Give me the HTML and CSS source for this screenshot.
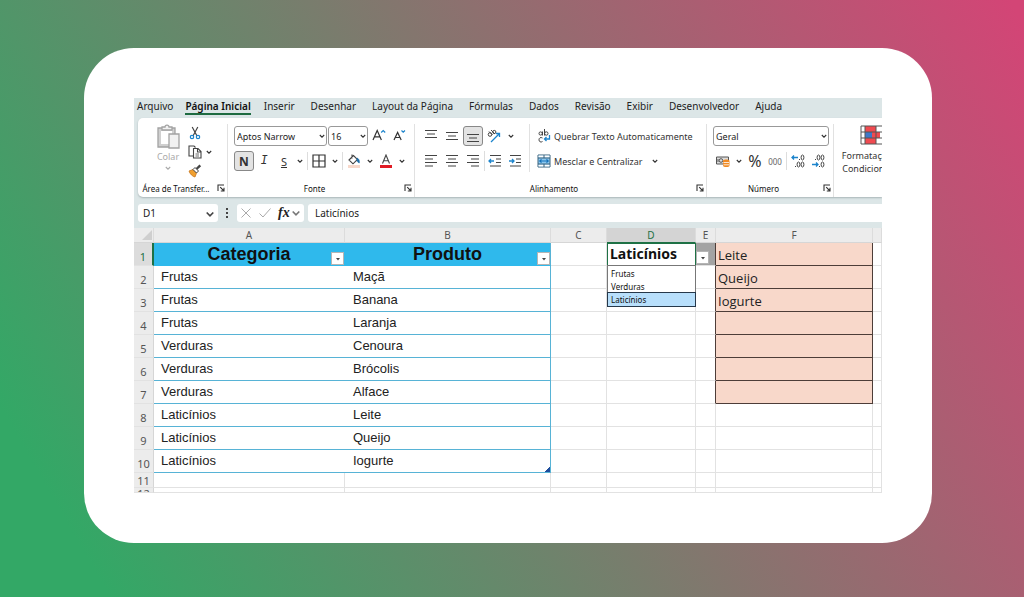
FILE: index.html
```html
<!DOCTYPE html>
<html lang="pt-BR">
<head>
    <meta charset="UTF-8">
    <meta name="viewport" content="width=device-width, initial-scale=1.0">
    <title>Lista suspensa dependente</title>
    <link rel="stylesheet" href="styles.css">
</head>
<body>

    <!-- shared icons -->
    <svg class="sprite" aria-hidden="true">
        <symbol id="chev" viewBox="0 0 8 8"><path d="M1.8 3 4 5.2 6.2 3" fill="none" stroke="currentColor" stroke-width="1.1"/></symbol>
        <symbol id="launch" viewBox="0 0 8 8"><path d="M1 7V1h6M3.2 3.2 7 7M7 3.8V7H3.8" fill="none" stroke="#333" stroke-width="1.1"/></symbol>
        <symbol id="drop" viewBox="0 0 8 8"><path d="M2 3h4L4 5.4z" fill="#444"/></symbol>
    </svg>

    <main class="card">
        <div class="app">

            <nav class="tabs">
                <a href="#">Arquivo</a>
                <a href="#" class="active">Página Inicial</a>
                <a href="#">Inserir</a>
                <a href="#">Desenhar</a>
                <a href="#">Layout da Página</a>
                <a href="#">Fórmulas</a>
                <a href="#">Dados</a>
                <a href="#">Revisão</a>
                <a href="#">Exibir</a>
                <a href="#">Desenvolvedor</a>
                <a href="#">Ajuda</a>
            </nav>

            <div class="ribbon">
                <section class="group clipboard">
                    <div class="group-body">
                        <button class="paste" disabled>
                            <svg width="26" height="26" viewBox="0 0 26 26" fill="#f1f1f1" stroke="#a3a3a3" stroke-width="1.3">
                                <path d="M3 4h17v19H3z" fill="#d0d0d0"/>
                                <path d="M6 7h11v13H6z" fill="#fff" stroke="none"/>
                                <path d="M7 6V3h3c0-2.600 4-2.600 4 0h3v3z"/>
                                <path d="M14 10h10v14H14z"/>
                            </svg>
                            <span>Colar</span>
                            <svg width="8" height="8"><use href="#chev"/></svg>
                        </button>
                        <div class="clip-tools">
                            <button aria-label="Recortar">
                                <svg width="14" height="14" viewBox="0 0 14 14" fill="none">
                                    <path d="M4.200 1l4.800 9M9.800 1 5 10" stroke="#444" stroke-width="1.200"/>
                                    <circle cx="4" cy="11" r="1.700" stroke="#1c84cc" stroke-width="1.200"/>
                                    <circle cx="10" cy="11" r="1.700" stroke="#1c84cc" stroke-width="1.200"/>
                                </svg>
                            </button>
                            <button aria-label="Copiar">
                                <svg width="14" height="14" viewBox="0 0 14 14" fill="#fff" stroke="#444" stroke-width="1.100">
                                    <path d="M5 11H1V1h5l1.500 1.500"/>
                                    <path d="M5.500 3.500h4.500l3 3V13H5.500zM9.500 3.500V7H13"/>
                                    <path d="M7.500 9h3.500M7.500 11h3.500" stroke-width=".8"/>
                                </svg>
                                <svg class="side" width="8" height="8"><use href="#chev"/></svg>
                            </button>
                            <button aria-label="Pincel de Formatação">
                                <svg width="14" height="14" viewBox="0 0 14 14">
                                    <path d="M1 7l4-1.500L8.500 9 7 13C4.500 12.500 2 10 1 7z" fill="#f0a030" stroke="#c8761c" stroke-width=".8"/>
                                    <path d="M5 5.500 7 3.500 10.500 7 8.500 9z" fill="#fff" stroke="#444"/>
                                    <path d="M8.500 5 12.300 1.300" stroke="#444" stroke-width="2.400"/>
                                </svg>
                            </button>
                        </div>
                    </div>
                    <footer><span>Área de Transfer...</span><button aria-label="Opções"><svg width="8" height="8"><use href="#launch"/></svg></button></footer>
                </section>

                <section class="group font">
                    <div class="group-body rows">
                        <div class="row">
                            <label class="select name"><select aria-label="Fonte"><option>Aptos Narrow</option></select><svg width="8" height="8"><use href="#chev"/></svg></label>
                            <label class="select size"><select aria-label="Tamanho"><option>16</option></select><svg width="8" height="8"><use href="#chev"/></svg></label>
                            <button class="tool" aria-label="Aumentar Fonte">
                                <svg width="16" height="16" viewBox="0 0 16 16" fill="none" stroke="#333" stroke-width="1.200"><path d="M3 12 7.200 2.500 11.400 12M4.500 8.800h5.400"/><path d="M11.200 4.500l2-2 2 2" stroke="#1c84cc"/></svg>
                            </button>
                            <button class="tool" aria-label="Diminuir Fonte">
                                <svg width="16" height="16" viewBox="0 0 16 16" fill="none" stroke="#333" stroke-width="1.200"><path d="M4 12 7.600 4.500 11.200 12M5.200 9.500h4.800"/><path d="M11.500 2.500l1.700 1.700L15 2.500" stroke="#1c84cc"/></svg>
                            </button>
                        </div>
                        <div class="row">
                            <button class="tool on bold">N</button>
                            <button class="tool italic">I</button>
                            <button class="tool under">S</button>
                            <button class="more" aria-label="Sublinhado"><svg width="8" height="8"><use href="#chev"/></svg></button>
                            <i class="rule"></i>
                            <button class="tool" aria-label="Bordas">
                                <svg width="14" height="14" viewBox="0 0 14 14" fill="none" stroke="#333" stroke-width="1.200"><path d="M1 1h12v12H1zM7 1v12M1 7h12"/></svg>
                            </button>
                            <button class="more" aria-label="Mais bordas"><svg width="8" height="8"><use href="#chev"/></svg></button>
                            <i class="rule"></i>
                            <button class="tool" aria-label="Cor de Preenchimento">
                                <svg width="14" height="14" viewBox="0 0 14 14" fill="none">
                                    <path d="M2 6 6.500 1.500l4 4L6 9.800zM5 .5v4" stroke="#444" stroke-width="1.100"/>
                                    <path d="M10 4c1.800.7 2.700 2.500 2.300 5-2-.5-2.700-2.500-2.300-5z" fill="#1c6ca8" stroke="#1c6ca8" stroke-width=".6"/>
                                    <path d="M1 11h12v3H1z" fill="#f8d8ca"/>
                                </svg>
                            </button>
                            <button class="more" aria-label="Mais cores"><svg width="8" height="8"><use href="#chev"/></svg></button>
                            <button class="tool" aria-label="Cor da Fonte">
                                <svg width="14" height="14" viewBox="0 0 14 14" fill="none"><path d="M3.500 9.500 7 1l3.500 8.500M4.700 6.700h4.600" stroke="#444" stroke-width="1.100"/><path d="M1 11h12v3H1z" fill="#e01b24"/></svg>
                            </button>
                            <button class="more" aria-label="Mais cores da fonte"><svg width="8" height="8"><use href="#chev"/></svg></button>
                        </div>
                    </div>
                    <footer><span>Fonte</span><button aria-label="Opções"><svg width="8" height="8"><use href="#launch"/></svg></button></footer>
                </section>

                <section class="group align">
                    <div class="group-body">
                        <div class="rows">
                            <div class="row spaced">
                                <button class="tool" aria-label="Alinhar em Cima"><svg width="14" height="14" viewBox="0 0 14 14"><path d="M1 1.500h12M3 5h8M1 8.500h12" stroke="#444" stroke-width="1.200"/></svg></button>
                                <button class="tool" aria-label="Alinhar no Meio"><svg width="14" height="14" viewBox="0 0 14 14"><path d="M1 3.500h12M3 7h8M1 10.500h12" stroke="#444" stroke-width="1.200"/></svg></button>
                                <button class="tool on" aria-label="Alinhar Embaixo"><svg width="14" height="14" viewBox="0 0 14 14"><path d="M1 5.500h12M3 9h8M1 12.500h12" stroke="#444" stroke-width="1.200"/></svg></button>
                                <button class="tool" aria-label="Orientação">
                                    <svg width="16" height="14" viewBox="0 0 16 14" fill="none">
                                        <g stroke="#444"><circle cx="4" cy="5.500" r="1.800"/><path d="M3 2.500l3.500 3.500M5 1l4 4"/><circle cx="8.300" cy="3" r="1.600"/></g>
                                        <path d="M5 13 13.500 4.500M10 4.500h3.500V8" stroke="#1c84cc" stroke-width="1.300"/>
                                    </svg>
                                </button>
                                <button class="more" aria-label="Mais orientações"><svg width="8" height="8"><use href="#chev"/></svg></button>
                            </div>
                            <div class="row spaced">
                                <button class="tool" aria-label="Alinhar à Esquerda"><svg width="14" height="14" viewBox="0 0 14 14"><path d="M1 1.500h12M1 5h8M1 8.500h12M1 12h8" stroke="#444" stroke-width="1.200"/></svg></button>
                                <button class="tool" aria-label="Centralizar"><svg width="14" height="14" viewBox="0 0 14 14"><path d="M1 1.500h12M3 5h8M1 8.500h12M3 12h8" stroke="#444" stroke-width="1.200"/></svg></button>
                                <button class="tool" aria-label="Alinhar à Direita"><svg width="14" height="14" viewBox="0 0 14 14"><path d="M1 1.500h12M5 5h8M1 8.500h12M5 12h8" stroke="#444" stroke-width="1.200"/></svg></button>
                                <button class="tool split" aria-label="Diminuir Recuo"><svg width="14" height="14" viewBox="0 0 14 14" fill="none"><path d="M2 1.500h11M8 5h5M8 8.500h5M2 12h11" stroke="#444" stroke-width="1.200"/><path d="M6 7H1M3 5 1 7l2 2" stroke="#1c84cc" stroke-width="1.300"/></svg></button>
                                <button class="tool" aria-label="Aumentar Recuo"><svg width="14" height="14" viewBox="0 0 14 14" fill="none"><path d="M2 1.500h11M8 5h5M8 8.500h5M2 12h11" stroke="#444" stroke-width="1.200"/><path d="M1 7h5M4 5l2 2-2 2" stroke="#1c84cc" stroke-width="1.300"/></svg></button>
                            </div>
                        </div>
                        <div class="rows wrap-tools">
                            <button class="wide">
                                <svg width="14" height="14" viewBox="0 0 14 14" fill="none" stroke="#444">
                                    <circle cx="3.600" cy="4.500" r="1.600"/><path d="M5.500 2.500V6.500M7.500 0v6.500"/><circle cx="9.300" cy="4.500" r="1.700"/>
                                    <path d="M5.500 9c-2-1.200-3.500 0-3.500 1.800s1.700 3 3.500 1.700"/>
                                    <path d="M12.500 6v4H7.500M9.500 8l-2 2 2 2" stroke="#1c84cc" stroke-width="1.300"/>
                                </svg>
                                Quebrar Texto Automaticamente
                            </button>
                            <button class="wide">
                                <svg width="14" height="14" viewBox="0 0 14 14" fill="none">
                                    <path d="M1 1h12v12H1z" fill="#8cc8f0" stroke="#39607b"/><path d="M1.500 1.500h11v2h-11zM1.500 10.500h11v2h-11z" fill="#fff"/><path d="M1 4h12M1 10h12M7 1v3M7 10v3" stroke="#39607b"/>
                                    <path d="M2.500 7h9M4.500 5.300 2.700 7l1.800 1.700M9.500 5.300 11.300 7 9.500 8.700" stroke="#1370b8" stroke-width="1.100"/>
                                </svg>
                                Mesclar e Centralizar
                                <svg class="after" width="8" height="8"><use href="#chev"/></svg>
                            </button>
                        </div>
                    </div>
                    <footer><span>Alinhamento</span><button aria-label="Opções"><svg width="8" height="8"><use href="#launch"/></svg></button></footer>
                </section>

                <section class="group number">
                    <div class="group-body rows">
                        <div class="row">
                            <label class="select format"><select aria-label="Formato de Número"><option>Geral</option></select><svg width="8" height="8"><use href="#chev"/></svg></label>
                        </div>
                        <div class="row">
                            <button class="tool" aria-label="Formato de Contabilização">
                                <svg width="16" height="14" viewBox="0 0 16 14" fill="none">
                                    <path d="M1.500 3h12v7h-12z" fill="#ddd" stroke="#555"/><circle cx="6" cy="6.500" r="1.800" stroke="#555"/><path d="M3 5v3" stroke="#555"/>
                                    <path d="M8 7c0-2 6.500-2 6.500 0v4.500c0 2-6.500 2-6.500 0z" fill="#f08a24"/><path d="M8.500 8.500h5.500M8.500 10.800h5.500" stroke="#fff" stroke-width=".8"/>
                                </svg>
                            </button>
                            <button class="more" aria-label="Mais moedas"><svg width="8" height="8"><use href="#chev"/></svg></button>
                            <button class="tool percent">%</button>
                            <button class="tool zeros">000</button>
                            <i class="rule"></i>
                            <button class="tool" aria-label="Aumentar Casas Decimais">
                                <svg width="14" height="14" viewBox="0 0 14 14" fill="none" stroke="#444">
                                    <path d="M7 3.500H1M3 1.500l-2 2 2 2" stroke="#1c84cc" stroke-width="1.300"/>
                                    <ellipse cx="11.500" cy="3.500" rx="1.400" ry="2.500"/><ellipse cx="7.500" cy="10.500" rx="1.400" ry="2.500"/><ellipse cx="11.500" cy="10.500" rx="1.400" ry="2.500"/>
                                    <path d="M8 5.500h1M4 12.500h1"/>
                                </svg>
                            </button>
                            <button class="tool" aria-label="Diminuir Casas Decimais">
                                <svg width="14" height="14" viewBox="0 0 14 14" fill="none" stroke="#444">
                                    <path d="M1 10.500h6M5 8.500l2 2-2 2" stroke="#1c84cc" stroke-width="1.300"/>
                                    <ellipse cx="7.500" cy="3.500" rx="1.400" ry="2.500"/><ellipse cx="11.500" cy="3.500" rx="1.400" ry="2.500"/><ellipse cx="11.500" cy="10.500" rx="1.400" ry="2.500"/>
                                    <path d="M4 5.500h1M8 12.500h1"/>
                                </svg>
                            </button>
                        </div>
                    </div>
                    <footer><span>Número</span><button aria-label="Opções"><svg width="8" height="8"><use href="#launch"/></svg></button></footer>
                </section>

                <section class="group styles">
                    <button class="conditional">
                        <svg width="26" height="20" viewBox="0 0 26 20">
                            <path d="M1 1h24v18H1z" fill="#fff"/>
                            <path d="M5 1h11v6H5zM12 7h8v6h-8zM5 13h11v6H5z" fill="#f04a50"/><path d="M5 7h7v6H5z" fill="#3f78c8"/>
                            <path d="M1 1h24v18H1zM1 7h24M1 13h24M5 1v18M16 1v18" fill="none" stroke="#555"/>
                        </svg>
                        <span>Formatação</span>
                        <span>Condicional</span>
                    </button>
                </section>
            </div>

            <div class="formula-bar">
                <label class="name-box"><input type="text" value="D1" aria-label="Caixa de nome"><svg width="12" height="12"><use href="#chev"/></svg></label>
                <svg class="dots" width="3" height="12" viewBox="0 0 3 12" fill="#444"><path d="M0 1h2v2H0zM0 5h2v2H0zM0 9h2v2H0z"/></svg>
                <div class="fx">
                    <button aria-label="Cancelar"><svg width="12" height="12" viewBox="0 0 12 12" fill="none" stroke="#aaa"><path d="M1.500 1.500l9 9M10.500 1.500l-9 9"/></svg></button>
                    <button aria-label="Inserir"><svg width="14" height="12" viewBox="0 0 14 12" fill="none" stroke="#aaa"><path d="M1.500 6.500 5 10l7.500-8.500"/></svg></button>
                    <button class="fn">fx</button>
                    <svg class="fn-more" width="12" height="12"><use href="#chev"/></svg>
                </div>
                <input class="formula" type="text" value="Laticínios" aria-label="Barra de fórmulas">
            </div>

            <table class="sheet">
                <colgroup>
                    <col class="c-num"><col class="c-a"><col class="c-b"><col class="c-c"><col class="c-d"><col class="c-e"><col class="c-f"><col>
                </colgroup>
                <thead>
                    <tr>
                        <th class="corner"><svg width="10" height="10" viewBox="0 0 10 10"><path d="M10 0v10H0z" fill="#cfcfcf"/></svg></th>
                        <th>A</th><th>B</th><th>C</th><th class="sel">D</th><th>E</th><th>F</th><th></th>
                    </tr>
                </thead>
                <tbody>
                    <tr>
                        <th class="sel">1</th>
                        <td class="head"><div>Categoria<button class="filter" aria-label="Filtrar"><svg width="8" height="8"><use href="#drop"/></svg></button></div></td>
                        <td class="head last"><div>Produto<button class="filter" aria-label="Filtrar"><svg width="8" height="8"><use href="#drop"/></svg></button></div></td>
                        <td></td>
                        <td class="current">
                            <div>Laticínios
                                <ul class="options" role="listbox">
                                    <li role="option">Frutas</li>
                                    <li role="option">Verduras</li>
                                    <li role="option" aria-selected="true">Laticínios</li>
                                </ul>
                            </div>
                        </td>
                        <td class="gray edge"><div><button class="filter" aria-label="Abrir lista"><svg width="8" height="8"><use href="#drop"/></svg></button></div></td>
                        <td class="result">Leite</td><td></td>
                    </tr>
                    <tr><th>2</th><td class="data">Frutas</td><td class="data last">Maçã</td><td></td><td></td><td class="edge"></td><td class="result">Queijo</td><td></td></tr>
                    <tr><th>3</th><td class="data">Frutas</td><td class="data last">Banana</td><td></td><td></td><td class="edge"></td><td class="result">Iogurte</td><td></td></tr>
                    <tr><th>4</th><td class="data">Frutas</td><td class="data last">Laranja</td><td></td><td></td><td class="edge"></td><td class="result"></td><td></td></tr>
                    <tr><th>5</th><td class="data">Verduras</td><td class="data last">Cenoura</td><td></td><td></td><td class="edge"></td><td class="result"></td><td></td></tr>
                    <tr><th>6</th><td class="data">Verduras</td><td class="data last">Brócolis</td><td></td><td></td><td class="edge"></td><td class="result"></td><td></td></tr>
                    <tr><th>7</th><td class="data">Verduras</td><td class="data last">Alface</td><td></td><td></td><td class="edge"></td><td class="result"></td><td></td></tr>
                    <tr><th>8</th><td class="data">Laticínios</td><td class="data last">Leite</td><td></td><td></td><td></td><td></td><td></td></tr>
                    <tr><th>9</th><td class="data">Laticínios</td><td class="data last">Queijo</td><td></td><td></td><td></td><td></td><td></td></tr>
                    <tr><th>10</th><td class="data">Laticínios</td><td class="data last end">Iogurte</td><td></td><td></td><td></td><td></td><td></td></tr>
                    <tr class="short"><th>11</th><td></td><td></td><td></td><td></td><td></td><td></td><td></td></tr>
                    <tr class="cut"><th><div>12</div></th><td></td><td></td><td></td><td></td><td></td><td></td><td></td></tr>
                </tbody>
            </table>

        </div>
    </main>

</body>
</html>
```
FILE: styles.css
```css
* { box-sizing: border-box; }
body { margin: 0; min-height: 100vh; padding: 48px 92px 53px 84px; font-family: "Noto Sans", "Open Sans", sans-serif; color: #222; background: linear-gradient(60deg, #33a866 8%, #d34576 99%); }
button { display: flex; align-items: center; justify-content: center; padding: 0; border: 0; background: none; font: inherit; color: inherit; }
svg { flex: none; display: block; }
.sprite { position: absolute; width: 0; height: 0; }
.card { background: #fff; border-radius: 50px; padding: 50px; }
.app { overflow: hidden; background: #dce6e7; }

/* tabs */
.tabs { display: flex; height: 20px; padding: 0 3px; gap: 16px; font-size: 10px; line-height: 16px; white-space: nowrap; }
.tabs a { color: #222; text-decoration: none; height: 17px; }
.tabs a:first-child { margin-right: -4px; }
.tabs .active { margin-right: -3px; font-weight: 600; color: #111; border-bottom: 2px solid #1e6b41; }

/* ribbon */
.ribbon { display: flex; height: 79px; margin-left: 4px; padding-top: 6px; background: #fff; border-radius: 5px 0 0 5px; box-shadow: 0 1px 2px #a9b5b7; font-size: 9px; color: #333; }
.group { flex: none; display: flex; flex-direction: column; border-right: 1px solid #e1e1e1; }
.group-body { display: flex; flex: 1; padding-left: 6px; }
.group footer { display: flex; align-items: center; height: 16px; margin-bottom: 1px; font-size: 8px; white-space: nowrap; }
.group footer span { flex: 1; text-align: center; color: #111; }
.group footer button { width: 13px; }
.clipboard { width: 90px; }
.font { width: 187px; }
.align { width: 292px; }
.number { width: 127px; }
.styles { border: 0; }
.rows { display: flex; flex-direction: column; gap: 5px; padding-top: 2px; }
.row { display: flex; align-items: center; height: 20px; }
.spaced { gap: 1px; }
.tool { width: 20px; height: 20px; }
.more { width: 12px; height: 20px; }
.on { background: #e3e3e3; border: 1px solid #888; border-radius: 3px; }
.bold { font-size: 12px; font-weight: 700; }
.italic { font: italic 12px "Liberation Mono", monospace; }
.under { font-size: 11px; text-decoration: underline; }
.percent { font-size: 16px; }
.zeros { font-size: 8px; color: #666; }
.rule { width: 1px; height: 18px; margin: 0 1px; background: #ddd; }
.split { border-left: 1px solid #ddd; }

.select { position: relative; height: 20px; }
.select select { appearance: none; width: 100%; height: 20px; padding: 0 0 0 2px; border: 1px solid #999; border-radius: 3px; background: #fff; font: inherit; color: #222; }
.select svg { position: absolute; right: 1px; top: 6px; }
.name { width: 93px; margin-right: 1px; }
.size { width: 40px; }
.format { width: 116px; }

.clipboard .group-body { padding-left: 14px; }
.paste { flex-direction: column; width: 32px; justify-content: flex-start; color: #aaa; }
.paste span { line-height: 14px; }
.clip-tools { display: flex; flex-direction: column; justify-content: space-between; width: 26px; padding-left: 4px; }
.clip-tools button { position: relative; width: 14px; height: 18px; }
.side { position: absolute; left: 17px; top: 5px; }

.wrap-tools { margin-left: 4px; padding-left: 7px; border-left: 1px solid #e1e1e1; height: 48px; }
.wide { justify-content: flex-start; gap: 3px; height: 20px; white-space: nowrap; }
.after { margin-left: 5px; }

.conditional { flex-direction: column; width: 66px; padding-top: 1px; line-height: 13px; }
.conditional svg { margin: 0 0 4px 12px; }

/* formula bar */
.formula-bar { display: flex; align-items: center; height: 31px; padding-left: 4px; font-size: 10px; }
.formula-bar input { border: 0; background: #fff; border-radius: 3px; height: 18px; padding: 0 0 0 5px; font: inherit; color: #222; }
.name-box { position: relative; width: 80px; color: #444; }
.name-box input { width: 80px; }
.name-box svg { position: absolute; right: 2px; top: 4px; }
.dots { margin: 0 8px; }
.fx { display: flex; align-items: center; gap: 6px; width: 67px; height: 18px; padding-left: 3px; background: #fff; border-radius: 3px; color: #777; }
.fn { font: italic bold 14px "Liberation Serif", serif; color: #222; }
.fn-more { margin-left: -6px; }
.formula-bar .formula { flex: 1; min-width: 0; margin-left: 4px; padding-left: 7px; border-radius: 3px 0 0 3px; }

/* sheet */
.sheet { width: 100%; table-layout: fixed; border-collapse: separate; border-spacing: 0; background: #fff; }
.c-num { width: 20px; }
.c-a { width: 191px; }
.c-b { width: 206px; }
.c-c { width: 56px; }
.c-d { width: 89px; }
.c-e { width: 20px; }
.c-f { width: 157px; }
.sheet th, .sheet td { padding: 0; border: 0 solid #e2e2e2; border-width: 0 1px 1px 0; }
.sheet th { background: #ececec; font-size: 10px; line-height: 12px; font-weight: 400; color: #555; border-color: #d6d6d6; }
.sheet thead th { height: 15px; border-right-color: #dcdcdc; }
.sheet tbody th { padding-bottom: 2px; border-bottom-color: #e2e2e2; vertical-align: bottom; font-size: 11px; }
.sheet thead .sel { background: #d4d4d4; color: #1e7145; border-bottom-color: #1e7145; }
.sheet tbody .sel { background: #dcdcdc; color: #1e7145; border-right: 2px solid #1e7145; }
.corner svg { margin-left: 8px; }
.sheet tbody tr { height: 23px; }
.sheet td div { position: relative; }
.sheet .head { background: #2fb9ec; border-color: #2fb9ec; color: #111; font: bold 18px/22px "Liberation Sans", Arial, sans-serif; text-align: center; }
.sheet .data { padding-left: 7px; border-width: 0 0 1px; border-bottom-color: #57b3d6; font: 13px/22px "Liberation Sans", Arial, sans-serif; }
.sheet .last { border-right: 1px solid #57b3d6; }
.sheet .data.last { padding-left: 8px; }
.sheet .end { background: linear-gradient(135deg, transparent 50%, #1f4e9c 50%) right bottom / 5px 5px no-repeat; }
.sheet .current { border: 1px solid #1e7145; border-top: 0; outline: 1px solid #1e7145; outline-offset: -1px; padding-left: 2px; font-size: 14px; line-height: 22px; font-weight: 700; color: #111; }
.sheet .gray { background: #a3a3a3; }
.sheet .edge { border-right-color: #4d3d38; }
.sheet .result { background: #f8d8ca; border-color: #4d3d38; padding: 3px 0 1px 2px; font: 13px/18px "Open Sans", sans-serif; }
.sheet .short { height: 15px; }
.sheet .short th, .sheet .cut th { padding-bottom: 0; }
.sheet .cut { height: 5px; }
.sheet .cut div { height: 4px; overflow: hidden; }
.filter { position: absolute; right: 0; bottom: 0; width: 13px; height: 13px; background: #fff; border: 1px solid #b5b5b5; }
.gray .filter { left: 0; bottom: -10px; }
.options { position: absolute; left: -3px; top: 22px; z-index: 1; width: 89px; margin: 0; padding: 1px 0 0; list-style: none; background: #fff; border: 1px solid #777; font-size: 8px; line-height: 13px; font-weight: 400; }
.options li { padding-left: 3px; }
.options [aria-selected] { background: #b8dffb; outline: 1px solid #26384a; }
```
